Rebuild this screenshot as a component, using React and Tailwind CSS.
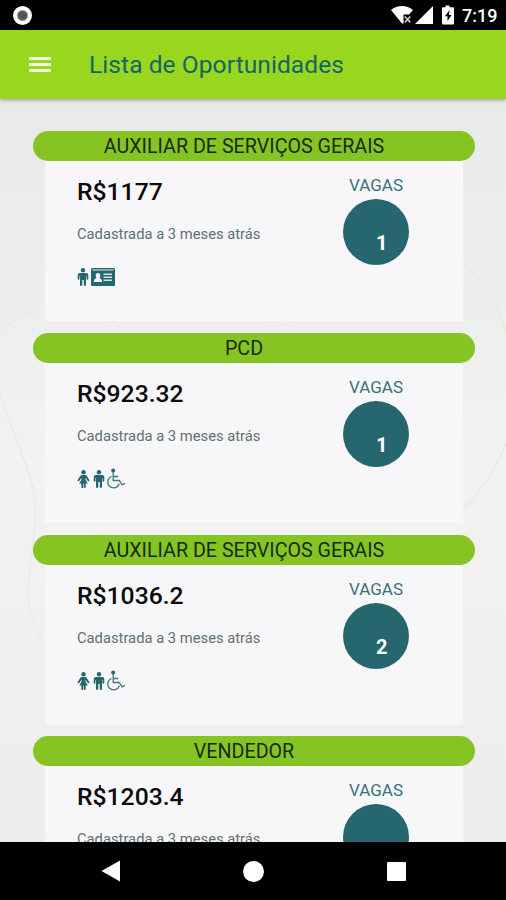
const JOBS = [
  {
    title: "AUXILIAR DE SERVIÇOS GERAIS",
    salary: "R$1177",
    posted: "Cadastrada a 3 meses atrás",
    openings: 1,
    tags: ["male", "card"],
  },
  {
    title: "PCD",
    salary: "R$923.32",
    posted: "Cadastrada a 3 meses atrás",
    openings: 1,
    tags: ["female", "male", "wheelchair"],
  },
  {
    title: "AUXILIAR DE SERVIÇOS GERAIS",
    salary: "R$1036.2",
    posted: "Cadastrada a 3 meses atrás",
    openings: 2,
    tags: ["female", "male", "wheelchair"],
  },
  {
    title: "VENDEDOR",
    salary: "R$1203.4",
    posted: "Cadastrada a 3 meses atrás",
    openings: null,
    tags: [],
  },
];

const MaleIcon = () => (
  <svg width="12" height="18" viewBox="0 0 12 18" fill="#25666f">
    <circle cx="6" cy="2.300" r="2.200" />
    <path d="M3 5h6a2.300 2.300 0 0 1 2.300 2.300v3.500a.9.900 0 0 1-1.800 0V8H9v9a1 1 0 0 1-1 1 1 1 0 0 1-1-1h-.2v-5H5.300v5H5a1 1 0 0 1-1 1 1 1 0 0 1-1-1V8h-.5v2.800a.9.900 0 0 1-1.800 0V7.300A2.300 2.300 0 0 1 3 5z" />
  </svg>
);

const FemaleIcon = () => (
  <svg width="13" height="18" viewBox="0 0 13 18" fill="#25666f">
    <circle cx="6.500" cy="2.300" r="2.200" />
    <path d="M5 5h3c.8 0 1.400.4 1.800 1l2.500 4c.6 1-.8 1.900-1.500 1L8.900 8.200h-.4L8.500 9.500l2.300 4H8.700V17c0 .6-.4 1-1 1s-.9-.4-.9-1v-3.500h-.6V17c0 .6-.4 1-.9 1-.6 0-1-.4-1-1v-3.500H2.200l2.300-4V8.200h-.4L2.200 11c-.7.9-2.100 0-1.500-1l2.500-4c.4-.6 1-1 1.800-1z" />
  </svg>
);

const CardIcon = () => (
  <svg width="24" height="18" viewBox="0 0 24 18" className="-ml-px">
    <rect width="24" height="18" rx="1.500" fill="#25666f" />
    <path fill="#a5c1c6" d="M1.500 1.200h21v1.500h-21z" />
    <path
      fill="#f7f7fa"
      d="M7 5c1.500 0 2.300 1.100 2.300 2.600 0 1-.4 1.900-1 2.400 1.800.4 2.800 1.800 2.800 4H2.900c0-2.200 1-3.600 2.800-4-.6-.5-1-1.400-1-2.400C4.700 6.100 5.500 5 7 5z"
    />
    <path fill="#d5e1e5" d="M12.500 5.500h8.500V7h-8.500zM12.500 8.500h8.500V10h-8.500zM12.500 11.500h8.500V13h-8.500z" />
  </svg>
);

const WheelchairIcon = () => (
  <svg
    width="20"
    height="22"
    viewBox="0 0 20 22"
    fill="none"
    stroke="#3f7880"
    strokeWidth="1.300"
    className="-ml-[2px]"
  >
    <circle cx="7.200" cy="2.500" r="2" fill="#25666f" stroke="none" />
    <path d="M7.200 4v8.500h6l2.800 4.300 3-1.500M7.200 8.500h5" />
    <path d="M5.500 8.500a5.900 5.900 0 1 0 7.800 7.200" />
  </svg>
);

const TAG_ICONS = {
  male: <MaleIcon />,
  female: <FemaleIcon />,
  card: <CardIcon />,
  wheelchair: <WheelchairIcon />,
};

const StatusBar = () => (
  <div className="h-[30px] shrink-0 bg-black flex items-center justify-between pl-[13px] pr-[9px]">
    <div className="size-[19px] rounded-full border-[4px] border-white bg-[#555] ring-1 ring-inset ring-[#999]" />
    <div className="flex items-center">
      <svg width="68" height="20" viewBox="0 0 68 20" fill="#fff">
        <path d="M0 5C6-.3 16-.3 22 5l-4 4.500h-5.500v9.300L11 18.500z" />
        <path d="M13.800 11.500l5.500 6M19.300 11.500l-5.500 6" stroke="#ccc" strokeWidth="1.700" />
        <path d="M42 1v18H24z" />
        <path d="M54.500 .5h4v1.800h3.500a1 1 0 0 1 1 1V18.500a1 1 0 0 1-1 1H52a1 1 0 0 1-1-1V3.300a1 1 0 0 1 1-1h2.500z" />
        <path fill="#000" d="M58.500 5l-4.500 6.300h2.500V16l4-6h-2.500z" />
      </svg>
      <span className="ml-[3px] mt-[2px] w-[35px] text-[18px] leading-5 font-medium text-white whitespace-nowrap">
        7:19
      </span>
    </div>
  </div>
);

const Header = () => (
  <div className="relative z-10 h-[69px] shrink-0 bg-[#99d71f] flex items-center pl-[29px] shadow-[0_1px_4px_rgba(0,0,0,0.35)]">
    <div className="flex flex-col gap-[3px]">
      <div className="w-[22px] h-[3px] bg-[#f4fbe6]" />
      <div className="w-[22px] h-[3px] bg-[#f4fbe6]" />
      <div className="w-[22px] h-[3px] bg-[#f4fbe6]" />
    </div>
    <h1 className="ml-[38px] mt-[2px] text-[24.500px] tracking-[0.080px] font-[450] text-[#146566] whitespace-nowrap">
      Lista de Oportunidades
    </h1>
  </div>
);

/* Faint curved lines behind the list */
const Backdrop = () => (
  <svg
    width="506"
    height="743"
    viewBox="0 99 506 743"
    fill="none"
    stroke="#e9ebdc"
    strokeWidth="1.200"
    className="absolute inset-0"
  >
    <path d="M0 334C12 320 25 311 45 308C80 302 110 315 125 333M0 394C8 420 20 445 31 480C43 520 27 560 28 595C29 620 38 635 46 647" />
    <path d="M464 264C485 282 500 306 506 334M506 443C498 466 482 491 464 508M260 320C285 322 300 330 310 340" />
  </svg>
);

const JobCard = ({ job }) => (
  <div className="shrink-0">
    <div className="h-[30px] rounded-full bg-[#86c423] flex items-center justify-center pr-5">
      <h2 className="pt-[2px] text-[19.700px] leading-[30px] text-[#172b08] whitespace-nowrap">{job.title}</h2>
    </div>
    <div className="h-[160px] mx-[12px] bg-[#f7f7fa] flex justify-between pl-[32px] pr-[54px]">
      <div className="flex flex-col">
        <p className="mt-[16px] text-[24.700px] leading-[30px] font-medium text-[#0b0b0c]">{job.salary}</p>
        <p className="mt-[17px] text-[14.750px] leading-5 text-[#5f7074] whitespace-nowrap">{job.posted}</p>
        <div className="mt-[22px] h-[22px] flex items-center gap-[3px]">
          {job.tags.map((tag) => (
            <span key={tag}>{TAG_ICONS[tag]}</span>
          ))}
        </div>
      </div>
      <div className="flex flex-col items-center">
        <p className="mt-[14px] text-[17px] leading-5 text-[#3b717b]">VAGAS</p>
        <div className="mt-[4px] size-[66px] rounded-full bg-[#25666f] pt-[33px] pl-[33px] text-[20px] leading-[22px] font-bold text-white">
          {job.openings}
        </div>
      </div>
    </div>
  </div>
);

const NavBar = () => (
  <div className="h-[58px] shrink-0 bg-black flex items-center justify-between pl-[101px] pr-[100px]">
    <svg width="20" height="22" viewBox="0 0 20 22" fill="#fff">
      <path d="M19 .5v21L.5 11z" />
    </svg>
    <div className="size-[21px] mr-[2px] rounded-full bg-white" />
    <div className="size-[19px] rounded-[1px] bg-white" />
  </div>
);

const App = () => (
  <div className="w-[506px] h-[900px] flex flex-col overflow-hidden font-[Roboto,sans-serif]">
    <StatusBar />
    <Header />
    <div className="relative flex-1 min-h-0 overflow-hidden bg-linear-to-b from-[#e8e9eb] via-[#f2f2f2] to-[#ededee]">
      <Backdrop />
      <div className="relative flex flex-col gap-[11.800px] pt-[32px] pl-[33px] pr-[31px]">
        {JOBS.map((job, i) => (
          <JobCard key={i} job={job} />
        ))}
      </div>
    </div>
    <NavBar />
  </div>
);

export default App;
